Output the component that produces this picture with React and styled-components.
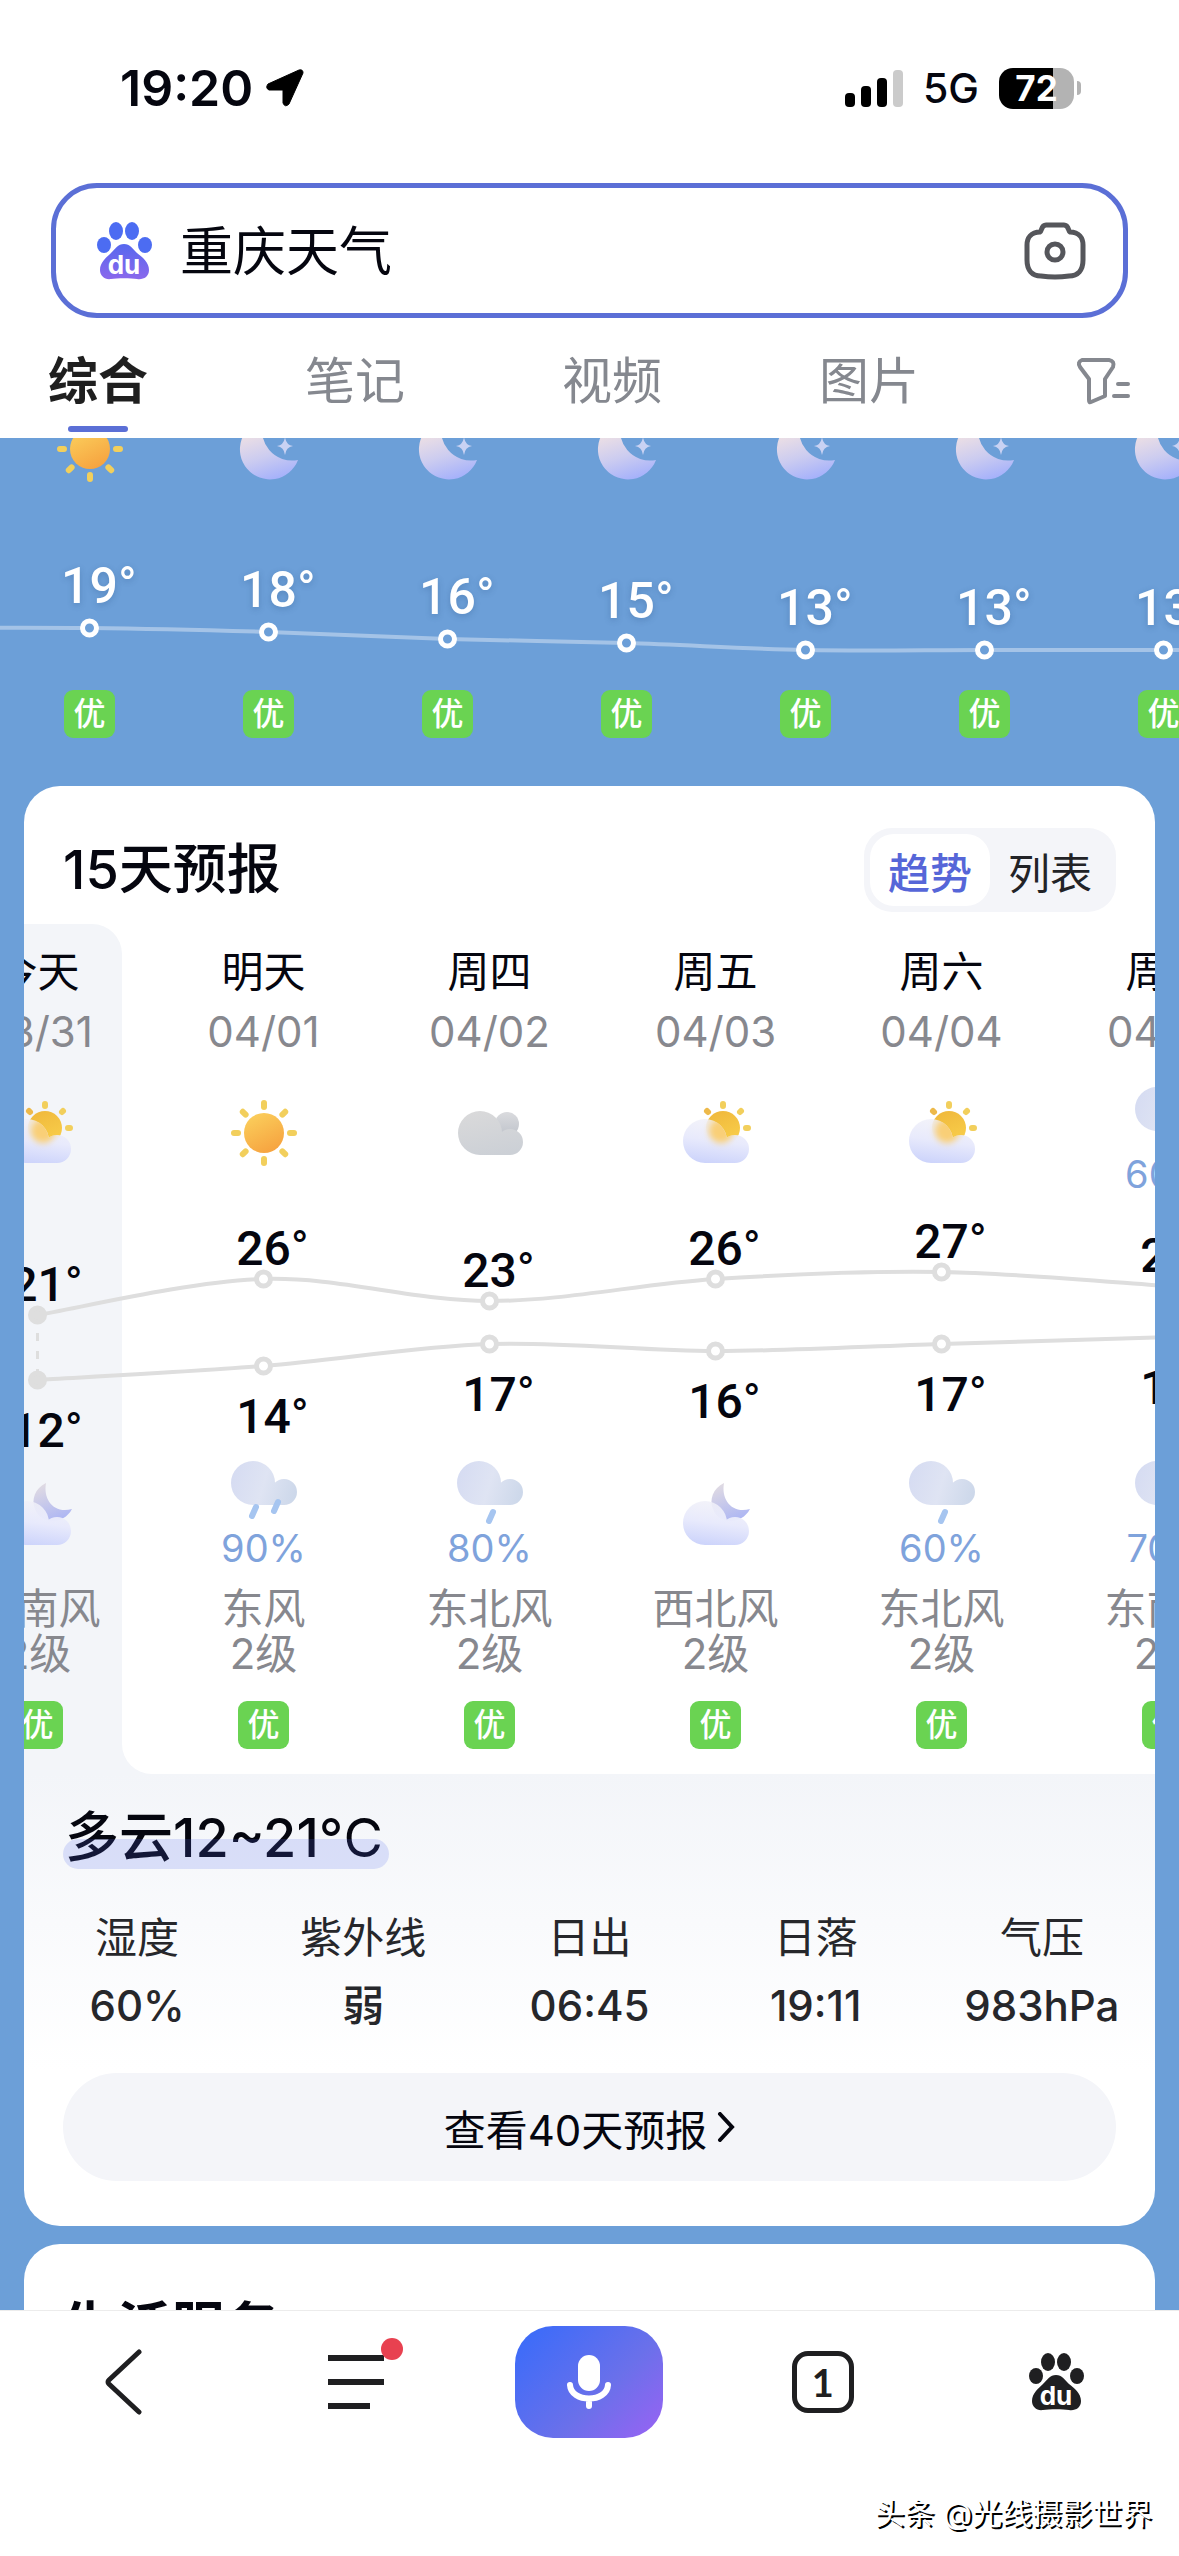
import React, { useState } from "react";
import styled, { createGlobalStyle } from "styled-components";

const GlobalStyle = createGlobalStyle`
  * {
    box-sizing: border-box;
  }

  body {
    margin: 0;
    background: #ffffff;
    color: #05060f;
    font-family: Inter, "Noto Sans CJK SC", sans-serif;
  }

  button,
  input {
    margin: 0;
    padding: 0;
    border: 0;
    background: none;
    color: inherit;
    font: inherit;
  }

  svg {
    display: block;
    flex-shrink: 0;
  }
`;

const Page = styled.div`
  display: flex;
  flex-direction: column;
  height: 100vh;
  overflow: hidden;
`;

const Header = styled.header`
  flex-shrink: 0;
`;

const StatusBar = styled.div`
  display: flex;
  align-items: center;
  justify-content: space-between;
  padding: 58px 98px 65px 120px;
`;

const StatusGroup = styled.div`
  display: flex;
  align-items: center;
  gap: ${({ $gap }) => $gap}px;
  height: 60px;
`;

const Time = styled.span`
  font-size: 50px;
  font-weight: 600;
  line-height: 60px;
`;

const Network = styled.span`
  font-size: 41px;
  font-weight: 500;
  line-height: 60px;
`;

const Battery = styled.div`
  display: flex;
  align-items: center;
  gap: 3px;
`;

const BatteryBody = styled.span`
  width: 75px;
  height: 41px;
  border-radius: 14px;
  background: linear-gradient(
    to right,
    #000000 ${({ $level }) => $level}%,
    #b3b3b3 ${({ $level }) => $level}%
  );
  color: #ffffff;
  font-size: 35px;
  font-weight: 700;
  line-height: 41px;
  text-align: center;
`;

const BatteryTip = styled.span`
  width: 4px;
  height: 14px;
  border-radius: 0 8px 8px 0;
  background: #b3b3b3;
`;

const SearchBox = styled.form`
  display: flex;
  align-items: center;
  gap: 28px;
  height: 135px;
  margin: 0 51px;
  padding: 0 37px 0 41px;
  border: 5px solid #5b6fd6;
  border-radius: 46px;
`;

const SearchInput = styled.input`
  flex: 1;
  min-width: 0;
  padding-top: 3px;
  font-size: 53px;
  line-height: 72px;
  outline: none;
`;

const IconButton = styled.button`
  display: flex;
  cursor: pointer;
`;

const TabBar = styled.nav`
  display: flex;
  justify-content: space-between;
  padding: 33px 49px 6px 48px;
`;

const Tab = styled.button`
  color: ${({ $active }) => ($active ? "#1f1f1f" : "#85888f")};
  font-size: 50px;
  font-weight: ${({ $active }) => ($active ? 700 : 400)};
  line-height: 60px;
  cursor: pointer;

  &::after {
    content: "";
    display: block;
    width: 60px;
    height: 6px;
    margin: 15px auto 0;
    border-radius: 3px;
    background: ${({ $active }) => ($active ? "#5b6fd6" : "transparent")};
  }
`;

const FilterButton = styled(IconButton)`
  height: 60px;
  align-items: center;
`;

const Main = styled.main`
  flex: 1;
  min-height: 0;
  overflow: hidden;
  background: #6c9fd8;
`;

const Hourly = styled.section`
  display: grid;
  margin: -22px 0 48px;
  overflow: hidden;
`;

const HourlyRow = styled.div`
  grid-area: 1 / 1;
  display: flex;
`;

const HourCell = styled.div`
  display: flex;
  flex: 0 0 179px;
  flex-direction: column;
  align-items: center;
`;

const HourChart = styled.svg`
  grid-area: 1 / 1;
  margin-top: 66px;
  pointer-events: none;
`;

const HourTemp = styled.div`
  height: ${({ $top }) => 208 - $top}px;
  margin-top: ${({ $top }) => $top}px;
  color: #ffffff;
  font-family: Roboto, "Noto Sans CJK SC", sans-serif;
  font-size: 50px;
  font-weight: 500;
  line-height: 52px;
  text-shadow: 0 2px 6px rgba(40, 80, 130, 0.3);
`;

const DegreeSign = styled.span`
  display: inline-block;
  width: 0;
  font-weight: 400;
`;

const Badge = styled.span`
  width: 51px;
  height: 48px;
  border-radius: 9px;
  background: #6ad352;
  color: #ffffff;
  font-size: 32px;
  font-weight: 500;
  line-height: 48px;
  text-align: center;
`;

const Card = styled.section`
  margin: 0 24px 18px;
  border-radius: 36px;
  background: #ffffff;
  overflow: hidden;
`;

const CardHeader = styled.div`
  display: flex;
  align-items: center;
  justify-content: space-between;
  height: 138px;
  padding: 30px 39px 0 39px;
`;

const CardTitle = styled.h2`
  margin: 0;
  font-size: 54px;
  font-weight: ${({ $heavy }) => ($heavy ? 700 : 500)};
  line-height: 72px;
`;

const Segmented = styled.div`
  display: flex;
  padding: 6px;
  border-radius: 28px;
  background: #f4f5f9;
`;

const Segment = styled.button`
  width: 120px;
  height: 72px;
  border-radius: 24px;
  background: ${({ $active }) => ($active ? "#ffffff" : "transparent")};
  color: ${({ $active }) => ($active ? "#5666d8" : "#222327")};
  font-size: 42px;
  font-weight: ${({ $active }) => ($active ? 500 : 400)};
  cursor: pointer;
`;

const DailyStrip = styled.div`
  display: grid;
  margin-left: -71px;
  overflow: hidden;
  background: #f3f5f9;
`;

const DailyRow = styled.div`
  grid-area: 1 / 1;
  display: flex;
  width: 0;
`;

const TodayWrap = styled.div`
  background: #ffffff;
`;

const TodayPanel = styled.div`
  border-radius: 0 30px 0 0;
  background: #f3f5f9;
`;

const NextDays = styled.div`
  display: flex;
  gap: 57px;
  padding: 0 57px;
  border-bottom-left-radius: 30px;
  background: #ffffff;
`;

const DayCell = styled.div`
  display: flex;
  flex-direction: column;
  align-items: center;
  width: 169px;
  padding: 24px 0 25px;
`;

const DayName = styled.div`
  font-size: 42px;
  line-height: 48px;
`;

const DayDate = styled.div`
  margin-top: 12px;
  color: #87888e;
  font-size: 42px;
  line-height: 48px;
`;

const Condition = styled.div`
  display: flex;
  flex-direction: column;
  align-items: center;
  justify-content: center;
  height: 110px;
`;

const DayCondition = styled(Condition)`
  margin-top: 22px;
  padding-top: ${({ $rain }) => ($rain ? 16 : 0)}px;
`;

const RainChance = styled.span`
  color: #7fa3dc;
  font-size: 38px;
  line-height: 42px;
`;

const TempColumn = styled.div`
  height: 272px;
  font-family: Roboto, "Noto Sans CJK SC", sans-serif;
  font-size: 48px;
  font-weight: 500;
  line-height: 48px;
`;

const DayTemp = styled.div`
  padding-top: ${({ $gap }) => $gap}px;
`;

const DayChart = styled.svg`
  grid-area: 1 / 1;
  margin-top: 264px;
  pointer-events: none;
`;

const Wind = styled.div`
  margin: 16px 0 25px;
  color: #87888e;
  font-size: 42px;
  line-height: 45px;
  text-align: center;
  white-space: nowrap;
`;

const Summary = styled.div`
  padding: 28px 0 39px;
  background: linear-gradient(#f3f5f9, #ffffff 296px);
`;

const SummaryTitle = styled.h3`
  position: relative;
  width: fit-content;
  margin: 0 39px 36px;
  padding: 0 6px 0 2px;
  font-size: 54px;
  font-weight: 500;
  line-height: 72px;

  &::after {
    content: "";
    position: absolute;
    right: 0;
    bottom: 5px;
    left: 0;
    height: 30px;
    border-radius: 15px;
    background: rgba(84, 108, 238, 0.18);
  }
`;

const Unit = styled.span`
  font-weight: 400;
`;

const Stats = styled.dl`
  display: grid;
  grid-template-columns: repeat(5, 1fr);
  margin: 0;
  color: #26272b;
  font-size: 42px;
  text-align: center;
`;

const StatLabel = styled.dt`
  line-height: 56px;
`;

const StatValue = styled.dd`
  margin: 12px 0 0;
  font-weight: 500;
  line-height: 56px;
`;

const MoreLink = styled.a`
  display: flex;
  align-items: center;
  justify-content: center;
  gap: 10px;
  height: 108px;
  margin: 0 39px 45px;
  border-radius: 54px;
  background: #f4f5f9;
  color: inherit;
  font-size: 42px;
  text-decoration: none;
`;

const Footer = styled.footer`
  flex-shrink: 0;
  border-top: 1px solid #ececec;
  background: #ffffff;
`;

const Toolbar = styled.nav`
  display: grid;
  grid-template-columns: repeat(5, 1fr);
  align-items: center;
  justify-items: center;
  height: 142px;
  padding: 0 6px;
`;

const MenuButton = styled(IconButton)`
  position: relative;
`;

const Dot = styled.span`
  position: absolute;
  top: -17px;
  right: -19px;
  width: 22px;
  height: 22px;
  border-radius: 50%;
  background: #e84150;
`;

const VoiceButton = styled(IconButton)`
  align-items: center;
  justify-content: center;
  width: 148px;
  height: 112px;
  border-radius: 38px;
  background: linear-gradient(135deg, #366bfb, #6b70ea 60%, #9a62f4);
`;

const WindowCount = styled.button`
  width: 62px;
  height: 62px;
  border: 5px solid #1f1f21;
  border-radius: 16px;
  color: #1f1f21;
  font-family: Lato, sans-serif;
  font-size: 38px;
  font-weight: 700;
  line-height: 50px;
  cursor: pointer;
`;

const Credit = styled.p`
  margin: 37px 27px 20px;
  color: #ffffff;
  font-size: 30px;
  line-height: 46px;
  text-align: right;
  text-shadow: 2px 2px 0 #000000;
`;

const tabs = ["综合", "笔记", "视频", "图片"];

const hours = [
  { temp: 19, icon: "sun" },
  { temp: 18, icon: "moon" },
  { temp: 16, icon: "moon" },
  { temp: 15, icon: "moon" },
  { temp: 13, icon: "moon" },
  { temp: 13, icon: "moon" },
  { temp: 13, icon: "moon" },
];

const days = [
  { name: "今天", date: "03/31", day: "partlyDay", high: 21, low: 12, night: "partlyNight", wind: "西南风" },
  { name: "明天", date: "04/01", day: "sun", high: 26, low: 14, night: "rain", nightRain: 90, wind: "东风" },
  { name: "周四", date: "04/02", day: "cloudy", high: 23, low: 17, night: "drizzle", nightRain: 80, wind: "东北风" },
  { name: "周五", date: "04/03", day: "partlyDay", high: 26, low: 16, night: "partlyNight", wind: "西北风" },
  { name: "周六", date: "04/04", day: "partlyDay", high: 27, low: 17, night: "drizzle", nightRain: 60, wind: "东北风" },
  { name: "周日", date: "04/05", day: "drizzle", dayRain: 60, high: 25, low: 18, night: "drizzle", nightRain: 70, wind: "东南风" },
];

const stats = [
  ["湿度", "60%"],
  ["紫外线", "弱"],
  ["日出", "06:45"],
  ["日落", "19:11"],
  ["气压", "983hPa"],
];

const HOUR_WIDTH = 179;
const DAY_WIDTH = 169;
const DAY_STEP = 226;

const hourY = (temp) => Math.round(146 + (19 - temp) * 3.7);
const highY = (temp) => Math.round(91 + (26 - temp) * 7.2);
const lowY = (temp) => Math.round(156 + (17 - temp) * 7.2);

// Catmull-Rom spline through the points, written as cubic segments
const smoothPath = (points) => {
  let d = `M${points[0].x} ${points[0].y}`;
  for (let i = 0; i < points.length - 1; i++) {
    const p0 = points[i - 1] || points[i];
    const p1 = points[i];
    const p2 = points[i + 1];
    const p3 = points[i + 2] || p2;
    d += ` C${p1.x + (p2.x - p0.x) / 6} ${p1.y + (p2.y - p0.y) / 6}`;
    d += ` ${p2.x - (p3.x - p1.x) / 6} ${p2.y - (p3.y - p1.y) / 6}`;
    d += ` ${p2.x} ${p2.y}`;
  }
  return d;
};

// a big puff, a small puff and the flat base that joins them
const LOW_CLOUD =
  "M0 41a22 22 0 1 0 44 0a22 22 0 1 0-44 0z M38 49a14 14 0 1 0 28 0a14 14 0 1 0-28 0z M22 46v17h30v-17z";
const GREY_CLOUD =
  "M1 33a22 22 0 1 0 44 0a22 22 0 1 0-44 0z M40 42a13 13 0 1 0 26 0a13 13 0 1 0-26 0z M23 42v13h30v-13z";
const RAIN_CLOUD =
  "M0 22a22 22 0 1 0 44 0a22 22 0 1 0-44 0z M40 31a13 13 0 1 0 26 0a13 13 0 1 0-26 0z M22 31v13h31v-13z";

const Gradients = () => (
  <svg width="0" height="0" style={{ position: "absolute" }} aria-hidden="true">
    <defs>
      <linearGradient id="sunFill" x1="0.2" y1="0" x2="0.7" y2="1">
        <stop offset="0" stopColor="#fbcf5c" />
        <stop offset="1" stopColor="#f6a23f" />
      </linearGradient>
      <linearGradient id="sunSmall" x1="0.3" y1="0" x2="0.7" y2="1">
        <stop offset="0" stopColor="#f0b93c" />
        <stop offset="1" stopColor="#f9cf4b" />
      </linearGradient>
      <linearGradient id="moonFill" x1="0.3" y1="0" x2="0.6" y2="1">
        <stop offset="0.1" stopColor="#f3e3e2" />
        <stop offset="0.6" stopColor="#ccccf0" />
        <stop offset="1" stopColor="#a5b1fb" />
      </linearGradient>
      <linearGradient id="moonSmall" x1="0.2" y1="0" x2="0.6" y2="1">
        <stop offset="0" stopColor="#e2dce2" />
        <stop offset="1" stopColor="#adb6f3" />
      </linearGradient>
      <linearGradient id="cloudFill" x1="0.6" y1="0" x2="0.4" y2="1">
        <stop offset="0" stopColor="#f1f1f8" stopOpacity="0.85" />
        <stop offset="0.5" stopColor="#e8eafc" />
        <stop offset="1" stopColor="#cdd4fb" />
      </linearGradient>
      <linearGradient id="greyFill" x1="0.3" y1="0" x2="0.6" y2="1">
        <stop offset="0" stopColor="#d9d9da" />
        <stop offset="1" stopColor="#ccd0d6" />
      </linearGradient>
      <linearGradient id="greyBack" x1="0" y1="0" x2="0" y2="1">
        <stop offset="0" stopColor="#dadbde" />
        <stop offset="1" stopColor="#bfc3cb" />
      </linearGradient>
      <linearGradient id="rainFill" x1="0" y1="0.4" x2="1" y2="0.6">
        <stop offset="0" stopColor="#d6dcf2" />
        <stop offset="0.5" stopColor="#dfe4f3" />
        <stop offset="1" stopColor="#cdd8ea" />
      </linearGradient>
      <linearGradient id="pawFill" x1="0" y1="0" x2="0" y2="1">
        <stop offset="0" stopColor="#5667ee" />
        <stop offset="1" stopColor="#8a68ec" />
      </linearGradient>
      <filter id="glow" x="-50%" y="-50%" width="200%" height="200%">
        <feGaussianBlur stdDeviation="3" />
      </filter>
      <clipPath id="cloudClip">
        <path d={LOW_CLOUD} />
      </clipPath>
    </defs>
  </svg>
);

const SunIcon = () => (
  <>
    <circle cx="33" cy="33" r="20" fill="url(#sunFill)" />
    {[0, 45, 90, 135, 180, 225, 270, 315].map((angle) => (
      <rect
        key={angle}
        x="30"
        y="0"
        width="6"
        height="10"
        rx="3"
        fill="#f2cf5c"
        transform={`rotate(${angle} 33 33)`}
      />
    ))}
  </>
);

const MoonIcon = () => (
  <g fill="url(#moonFill)">
    <path d="M28 4 A30 30 0 1 0 62 44 A30 30 0 0 1 28 4Z" />
    <path d="M49 21 Q50 29 57 30 Q50 31 49 39 Q48 31 41 30 Q48 29 49 21Z" fill="#c9d2f3" />
  </g>
);

const PartlyDayIcon = () => (
  <>
    <g stroke="#f2cf5c" strokeWidth="6" strokeLinecap="round">
      <path d="M40 4v2M57 12l1-1M63 28h2" />
      <path d="M24 11l1 1" stroke="#edb94a" />
    </g>
    <circle cx="40" cy="28" r="17" fill="url(#sunSmall)" />
    <path d={LOW_CLOUD} fill="url(#cloudFill)" />
    <g clipPath="url(#cloudClip)">
      <circle cx="38" cy="31" r="12" fill="#f9cf77" filter="url(#glow)" />
    </g>
  </>
);

const PartlyNightIcon = () => (
  <>
    <path d="M41 1 C30 6 26 18 30 27 C35 42 58 44 67 27 C49 32 38 18 41 1Z" fill="url(#moonSmall)" />
    <path d={LOW_CLOUD} fill="url(#cloudFill)" />
  </>
);

const CloudyIcon = () => (
  <>
    <circle cx="50" cy="24" r="12" fill="url(#greyBack)" />
    <path d={GREY_CLOUD} fill="url(#greyFill)" />
  </>
);

const RainIcon = ({ heavy }) => (
  <>
    <path d={RAIN_CLOUD} fill="url(#rainFill)" />
    <path
      d={heavy ? "M25 46l-4 9M47 41l-4 9" : "M36 51l-4 9"}
      stroke="#a6c5f0"
      strokeWidth="6"
      strokeLinecap="round"
    />
  </>
);

const WeatherIcon = ({ name }) => (
  <svg width="66" height="66" viewBox="0 0 66 66" overflow="visible" fill="none" aria-hidden="true">
    {name === "sun" && <SunIcon />}
    {name === "moon" && <MoonIcon />}
    {name === "partlyDay" && <PartlyDayIcon />}
    {name === "partlyNight" && <PartlyNightIcon />}
    {name === "cloudy" && <CloudyIcon />}
    {name === "rain" && <RainIcon heavy />}
    {name === "drizzle" && <RainIcon />}
  </svg>
);

const PawIcon = ({ toes, pad }) => (
  <svg width="55" height="58" viewBox="0 0 55 58" aria-hidden="true">
    <g fill={toes}>
      <ellipse cx="19" cy="9" rx="7" ry="9" />
      <ellipse cx="35" cy="9" rx="7" ry="9" />
      <ellipse cx="7" cy="23" rx="7" ry="8" />
      <ellipse cx="48" cy="23" rx="7" ry="8" />
    </g>
    <path
      d="M27 22 C33 22 36 27 40 31 C45 35 52 40 52 48 C52 55 46 58 40 57 C34 56 20 56 14 57 C8 58 3 54 3 48 C3 40 10 35 14 31 C18 27 21 22 27 22Z"
      fill={pad}
    />
    <text x="27" y="52" fill="#ffffff" fontFamily="Inter, sans-serif" fontSize="26" fontWeight="700" textAnchor="middle">
      du
    </text>
  </svg>
);

const HourlyForecast = () => {
  const points = hours.map((hour, i) => ({
    x: i * HOUR_WIDTH + HOUR_WIDTH / 2,
    y: hourY(hour.temp),
  }));
  const width = hours.length * HOUR_WIDTH;
  const line = [
    { x: -90, y: points[0].y },
    ...points,
    { x: width + 90, y: points[points.length - 1].y },
  ];

  return (
    <Hourly>
      <HourChart width={width} height="208" fill="none">
        <path d={smoothPath(line)} stroke="#ffffff" strokeOpacity="0.38" strokeWidth="4" />
        {points.map((point) => (
          <circle key={point.x} cx={point.x} cy={point.y} r="7" fill="#6c9fd8" stroke="#ffffff" strokeWidth="5" />
        ))}
      </HourChart>
      <HourlyRow>
        {hours.map((hour, i) => (
          <HourCell key={i}>
            <WeatherIcon name={hour.icon} />
            <HourTemp $top={hourY(hour.temp) - 68}>
              {hour.temp}
              <DegreeSign>°</DegreeSign>
            </HourTemp>
            <Badge>优</Badge>
          </HourCell>
        ))}
      </HourlyRow>
    </Hourly>
  );
};

const Day = ({ item }) => {
  const highTop = highY(item.high) - 54;
  const lowTop = lowY(item.low) + 27;

  return (
    <DayCell>
      <DayName>{item.name}</DayName>
      <DayDate>{item.date}</DayDate>
      <DayCondition $rain={item.dayRain}>
        <WeatherIcon name={item.day} />
        {item.dayRain && <RainChance>{item.dayRain}%</RainChance>}
      </DayCondition>
      <TempColumn>
        <DayTemp $gap={highTop}>
          {item.high}
          <DegreeSign>°</DegreeSign>
        </DayTemp>
        <DayTemp $gap={lowTop - highTop - 48}>
          {item.low}
          <DegreeSign>°</DegreeSign>
        </DayTemp>
      </TempColumn>
      <Condition>
        <WeatherIcon name={item.night} />
        {item.nightRain && <RainChance>{item.nightRain}%</RainChance>}
      </Condition>
      <Wind>
        {item.wind}
        <br />
        2级
      </Wind>
      <Badge>优</Badge>
    </DayCell>
  );
};

const DailyForecast = () => {
  const [today, ...rest] = days;
  const x = (i) => i * DAY_STEP + DAY_WIDTH / 2;
  const highs = days.map((item, i) => ({ x: x(i), y: highY(item.high) }));
  const lows = days.map((item, i) => ({ x: x(i), y: lowY(item.low) }));

  return (
    <DailyStrip>
      <DailyRow>
        <TodayWrap>
          <TodayPanel>
            <Day item={today} />
          </TodayPanel>
        </TodayWrap>
        <NextDays>
          {rest.map((item) => (
            <Day key={item.date} item={item} />
          ))}
        </NextDays>
      </DailyRow>
      <DayChart width="100%" height="272" fill="none" stroke="#dedede">
        <path
          d={`M${x(0)} ${highs[0].y + 18}V${lows[0].y}`}
          strokeWidth="3"
          strokeDasharray="8 10"
        />
        {[highs, lows].map((points, row) => (
          <g key={row}>
            <path d={smoothPath(points)} strokeWidth="4" />
            {points.map((point, i) => (
              <circle
                key={i}
                cx={point.x}
                cy={point.y}
                r="7"
                fill={i === 0 ? "#dedede" : "#ffffff"}
                strokeWidth="5"
              />
            ))}
          </g>
        ))}
      </DayChart>
    </DailyStrip>
  );
};

const App = () => {
  const [tab, setTab] = useState("综合");
  const [view, setView] = useState("趋势");

  return (
    <Page>
      <GlobalStyle />
      <Gradients />
      <Header>
        <StatusBar>
          <StatusGroup $gap={12}>
            <Time>19:20</Time>
            <svg width="40" height="40" viewBox="0 0 40 40" aria-hidden="true">
              <path
                d="M3 16 L34 2 Q38 1 38 5 L24 36 Q20 40 18 35 V22 H4 Q0 20 3 16Z"
                fill="#000000"
                stroke="#000000"
                strokeLinejoin="round"
              />
            </svg>
          </StatusGroup>
          <StatusGroup $gap={20}>
            <svg width="58" height="38" viewBox="0 0 58 38" aria-hidden="true">
              <rect x="0" y="24" width="10" height="14" rx="4" />
              <rect x="16" y="17" width="10" height="21" rx="4" />
              <rect x="32" y="9" width="10" height="29" rx="4" />
              <rect x="48" y="1" width="10" height="37" rx="4" fill="#cbcbcb" />
            </svg>
            <Network>5G</Network>
            <Battery>
              <BatteryBody $level={72}>72</BatteryBody>
              <BatteryTip />
            </Battery>
          </StatusGroup>
        </StatusBar>
        <SearchBox onSubmit={(e) => e.preventDefault()}>
          <PawIcon toes="#4c6cf2" pad="url(#pawFill)" />
          <SearchInput type="text" aria-label="搜索" defaultValue="重庆天气" />
          <IconButton type="button" aria-label="拍照搜索">
            <svg width="62" height="58" viewBox="0 0 62 58" fill="none" stroke="#55565b" strokeWidth="5">
              <path
                d="M16 10 C18 9 17 3 22 3 H40 C45 3 44 9 46 10 C55 10 59 16 59 23 V38 C59 48 54 54 45 54 Q31 56 17 54 C8 54 3 48 3 38 V23 C3 16 7 10 16 10Z"
                strokeLinejoin="round"
              />
              <circle cx="31" cy="30" r="8" />
            </svg>
          </IconButton>
        </SearchBox>
        <TabBar>
          {tabs.map((name) => (
            <Tab key={name} $active={name === tab} onClick={() => setTab(name)}>
              {name}
            </Tab>
          ))}
          <FilterButton aria-label="筛选">
            <svg
              width="54"
              height="48"
              viewBox="0 0 54 48"
              fill="none"
              stroke="#85888f"
              strokeWidth="4"
              strokeLinecap="round"
              strokeLinejoin="round"
            >
              <path d="M6 3 H33 Q39 4 37 10 L29 22 V39 L15 45 Q13 46 13 43 V22 L4 10 Q1 5 6 3Z" />
              <path d="M42 27h10M38 39h14" />
            </svg>
          </FilterButton>
        </TabBar>
      </Header>

      <Main>
        <HourlyForecast />
        <Card>
          <CardHeader>
            <CardTitle>15天预报</CardTitle>
            <Segmented>
              {["趋势", "列表"].map((name) => (
                <Segment key={name} $active={name === view} onClick={() => setView(name)}>
                  {name}
                </Segment>
              ))}
            </Segmented>
          </CardHeader>
          <DailyForecast />
          <Summary>
            <SummaryTitle>
              多云12~21<Unit>°C</Unit>
            </SummaryTitle>
            <Stats>
              {stats.map(([label, value]) => (
                <div key={label}>
                  <StatLabel>{label}</StatLabel>
                  <StatValue>{value}</StatValue>
                </div>
              ))}
            </Stats>
          </Summary>
          <MoreLink href="#forecast40">
            查看40天预报
            <svg width="18" height="30" viewBox="0 0 18 30" fill="none" stroke="#05060f" strokeWidth="4">
              <path d="M3 2 L15 15 L3 28" strokeLinecap="round" />
            </svg>
          </MoreLink>
        </Card>
        <Card>
          <CardHeader>
            <CardTitle $heavy>生活服务</CardTitle>
          </CardHeader>
        </Card>
      </Main>

      <Footer>
        <Toolbar>
          <IconButton aria-label="返回">
            <svg width="38" height="66" viewBox="0 0 38 66" fill="none" stroke="#1f1f21" strokeWidth="5">
              <path d="M35 3 L5 31 Q3 33 5 35 L35 63" strokeLinecap="round" />
            </svg>
          </IconButton>
          <MenuButton aria-label="菜单">
            <svg width="56" height="54" viewBox="0 0 56 54" fill="#1f1f21">
              <path d="M0 0h56v6H0zM0 24h56v6H0zM0 48h42v6H0z" />
            </svg>
            <Dot />
          </MenuButton>
          <VoiceButton aria-label="语音搜索">
            <svg width="44" height="56" viewBox="0 0 44 56" fill="none">
              <rect x="11" y="1" width="22" height="36" rx="11" fill="#ffffff" />
              <path
                d="M3 31 C4 49 40 49 41 31 M22 45 V52"
                stroke="#ffffff"
                strokeWidth="6"
                strokeLinecap="round"
              />
            </svg>
          </VoiceButton>
          <WindowCount aria-label="窗口">1</WindowCount>
          <IconButton aria-label="首页">
            <PawIcon toes="#1f1f21" pad="#1f1f21" />
          </IconButton>
        </Toolbar>
        <Credit>头条 @光线摄影世界</Credit>
      </Footer>
    </Page>
  );
};

export default App;
